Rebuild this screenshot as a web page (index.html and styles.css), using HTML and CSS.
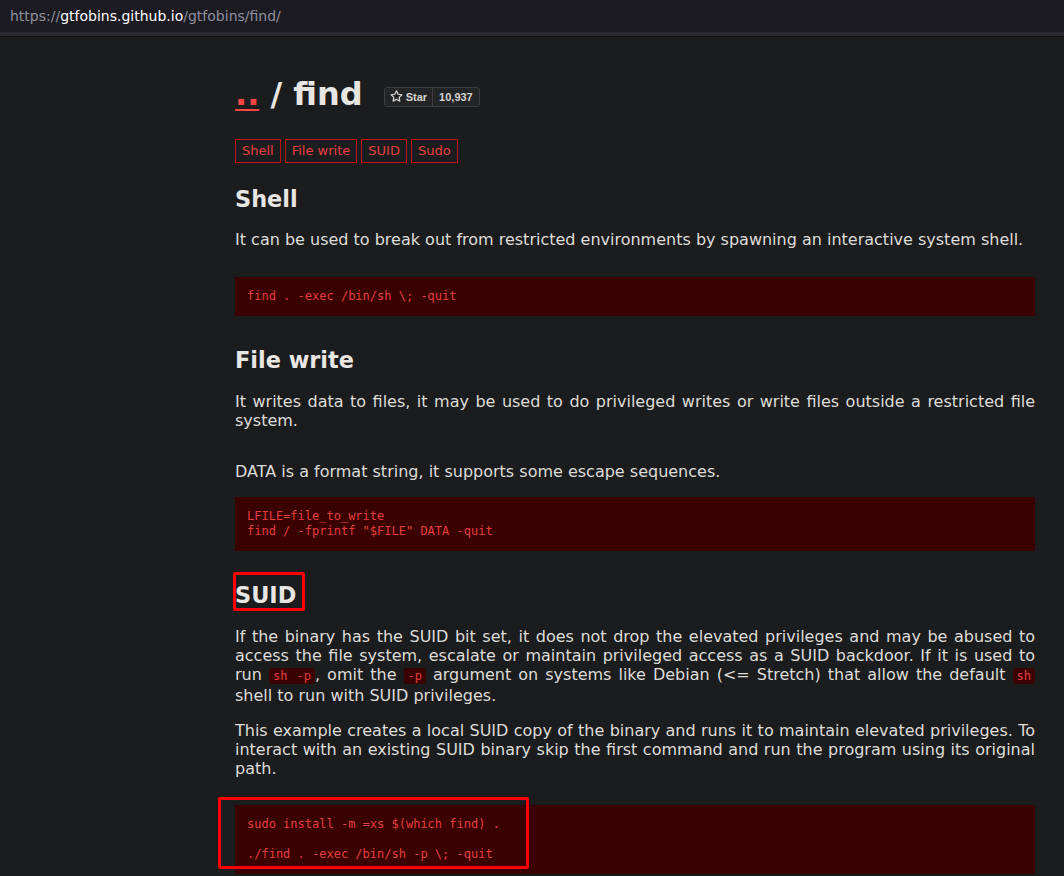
FILE: index.html
```html
<!DOCTYPE html>
<html>
<head>
<meta charset="utf-8">
<title>find | GTFOBins</title>
<link rel="stylesheet" href="styles.css">
</head>
<body>
<div class="urlbar">
  <div class="url"><span class="dim">https://</span><span class="host">gtfobins.github.io</span><span class="dim">/gtfobins/find/</span></div>
</div>
<div class="band"></div>
<main class="page">
  <div class="title-row">
    <h1 class="title"><a class="up" href="#">..</a> / find</h1>
    <div class="star">
      <span class="star-left">
        <svg class="star-icon" viewBox="0 0 16 16" width="13" height="13"><path fill="currentColor" d="M8 .25a.75.75 0 0 1 .673.418l1.882 3.815 4.21.612a.75.75 0 0 1 .416 1.279l-3.046 2.970.719 4.192a.75.75 0 0 1-1.088.791L8 12.347l-3.766 1.980a.75.75 0 0 1-1.088-.790l.720-4.194L.818 6.374a.75.75 0 0 1 .416-1.280l4.210-.611L7.327.668A.75.75 0 0 1 8 .250Zm0 2.445L6.615 5.500a.75.75 0 0 1-.564.410l-3.097.450 2.240 2.184a.75.75 0 0 1 .216.664l-.528 3.084 2.769-1.456a.75.75 0 0 1 .698 0l2.770 1.456-.530-3.084a.75.75 0 0 1 .216-.664l2.240-2.183-3.096-.450a.75.75 0 0 1-.564-.410L8 2.694Z"/></svg>
        Star
      </span>
      <span class="star-count">10,937</span>
    </div>
  </div>

  <ul class="tags">
    <li><a href="#shell">Shell</a></li>
    <li><a href="#file-write">File write</a></li>
    <li><a href="#suid">SUID</a></li>
    <li><a href="#sudo">Sudo</a></li>
  </ul>

  <h2 class="fn first" id="shell">Shell</h2>
  <p class="desc">It can be used to break out from restricted environments by spawning an interactive system shell.</p>
  <pre class="code gap-lg">find . -exec /bin/sh \; -quit</pre>

  <h2 class="fn" id="file-write">File write</h2>
  <p class="desc">It writes data to files, it may be used to do privileged writes or write files outside a restricted file system.</p>
  <p class="desc ex-desc">DATA is a format string, it supports some escape sequences.</p>
  <pre class="code gap-sm">LFILE=file_to_write
find / -fprintf "$FILE" DATA -quit</pre>

  <div class="anno-wrap">
    <h2 class="fn" id="suid">SUID</h2>
    <span class="anno anno-suid"></span>
  </div>
  <p class="desc">If the binary has the SUID bit set, it does not drop the elevated privileges and may be abused to access the file system, escalate or maintain privileged access as a SUID backdoor. If it is used to run <code class="inline">sh -p</code>, omit the <code class="inline">-p</code> argument on systems like Debian (&lt;= Stretch) that allow the default <code class="inline">sh</code> shell to run with SUID privileges.</p>
  <p class="desc para">This example creates a local SUID copy of the binary and runs it to maintain elevated privileges. To interact with an existing SUID binary skip the first command and run the program using its original path.</p>
  <div class="anno-wrap code-wrap">
    <pre class="code">sudo install -m =xs $(which find) .

./find . -exec /bin/sh -p \; -quit</pre>
    <span class="anno anno-code"></span>
  </div>
</main>
</body>
</html>
```
FILE: styles.css
```css
html, body {
  margin: 0;
  padding: 0;
}
body {
  background: #1b1c1e;
  color: #dedcd8;
  font-family: "DejaVu Sans", sans-serif;
  font-size: 16px;
  line-height: 19px;
  overflow: hidden;
}
.urlbar {
  height: 32px;
  background: #1c1b22;
  display: flex;
  align-items: center;
  padding-left: 10px;
}
.url {
  font-family: "DejaVu Sans", sans-serif;
  font-size: 14px;
  color: #fbfbfe;
  padding-top: 1px;
}
.url .dim {
  color: #8f8f9d;
}
.band {
  height: 4px;
  background: #2b2a33;
  border-bottom: 1px solid #0e0e10;
}
.page {
  width: 800px;
  margin-left: 235px;
  padding-top: 39px;
}
.title-row {
  display: flex;
  align-items: center;
  gap: 21px;
  height: 37px;
}
.title {
  margin: 0;
  font-size: 32px;
  line-height: 37px;
  font-weight: bold;
  color: #e8e6e3;
}
.up {
  color: #ff4545;
  text-decoration: underline;
  text-decoration-thickness: 2px;
  text-underline-offset: 4px;
}
.star {
  display: flex;
  height: 18px;
  border: 1px solid #3c3e41;
  border-radius: 3px;
  background: #222426;
  color: #d6d4d0;
  font-family: "Liberation Sans", Arial, sans-serif;
  font-weight: bold;
  font-size: 11px;
  line-height: 18px;
  margin-top: 4px;
}
.star-left {
  display: flex;
  align-items: center;
  gap: 3px;
  padding: 0 5px 0 5px;
  border-right: 1px solid #3c3e41;
}
.star-icon {
  display: block;
}
.star-count {
  padding: 0 6px 0 6px;
}
.tags {
  list-style: none;
  margin: 26px 0 0 0;
  padding: 0;
  display: flex;
  gap: 4px;
}
.tags a {
  display: block;
  border: 1px solid #c20d0d;
  color: #e84040;
  text-decoration: none;
  font-size: 13px;
  line-height: 16px;
  padding: 3px 6px;
}
.fn {
  margin: 31px 0 0 0;
  font-size: 22.4px;
  line-height: 26px;
  font-weight: bold;
  color: #e8e6e3;
}
.fn.first {
  margin-top: 23px;
}
.desc {
  margin: 19px 0 0 0;
  text-align: justify;
}
.fn.first + .desc {
  margin-top: 18px;
}
.desc.ex-desc {
  margin-top: 32px;
}
.desc.para {
  margin-top: 16px;
}
.code {
  margin: 0;
  background: #3b0000;
  color: #e33e3e;
  font-family: "DejaVu Sans Mono", monospace;
  font-size: 12px;
  line-height: 15px;
  padding: 12px;
  white-space: pre;
}
.code.gap-lg {
  margin-top: 28px;
}
.code.gap-sm {
  margin-top: 16px;
}
.code-wrap {
  margin-top: 27px;
}
code.inline {
  font-family: "DejaVu Sans Mono", monospace;
  font-size: 12px;
  background: #3b0000;
  color: #e33e3e;
  border-radius: 3px;
  padding: 1px 4px;
}
.anno-wrap {
  position: relative;
}
.anno {
  position: absolute;
  border: 3px solid #ff0000;
  border-radius: 2px;
  pointer-events: none;
}
.anno-suid {
  left: -2px;
  top: -10px;
  width: 66px;
  height: 33px;
}
.anno-code {
  left: -17px;
  top: -8px;
  width: 305px;
  height: 66px;
}
```
